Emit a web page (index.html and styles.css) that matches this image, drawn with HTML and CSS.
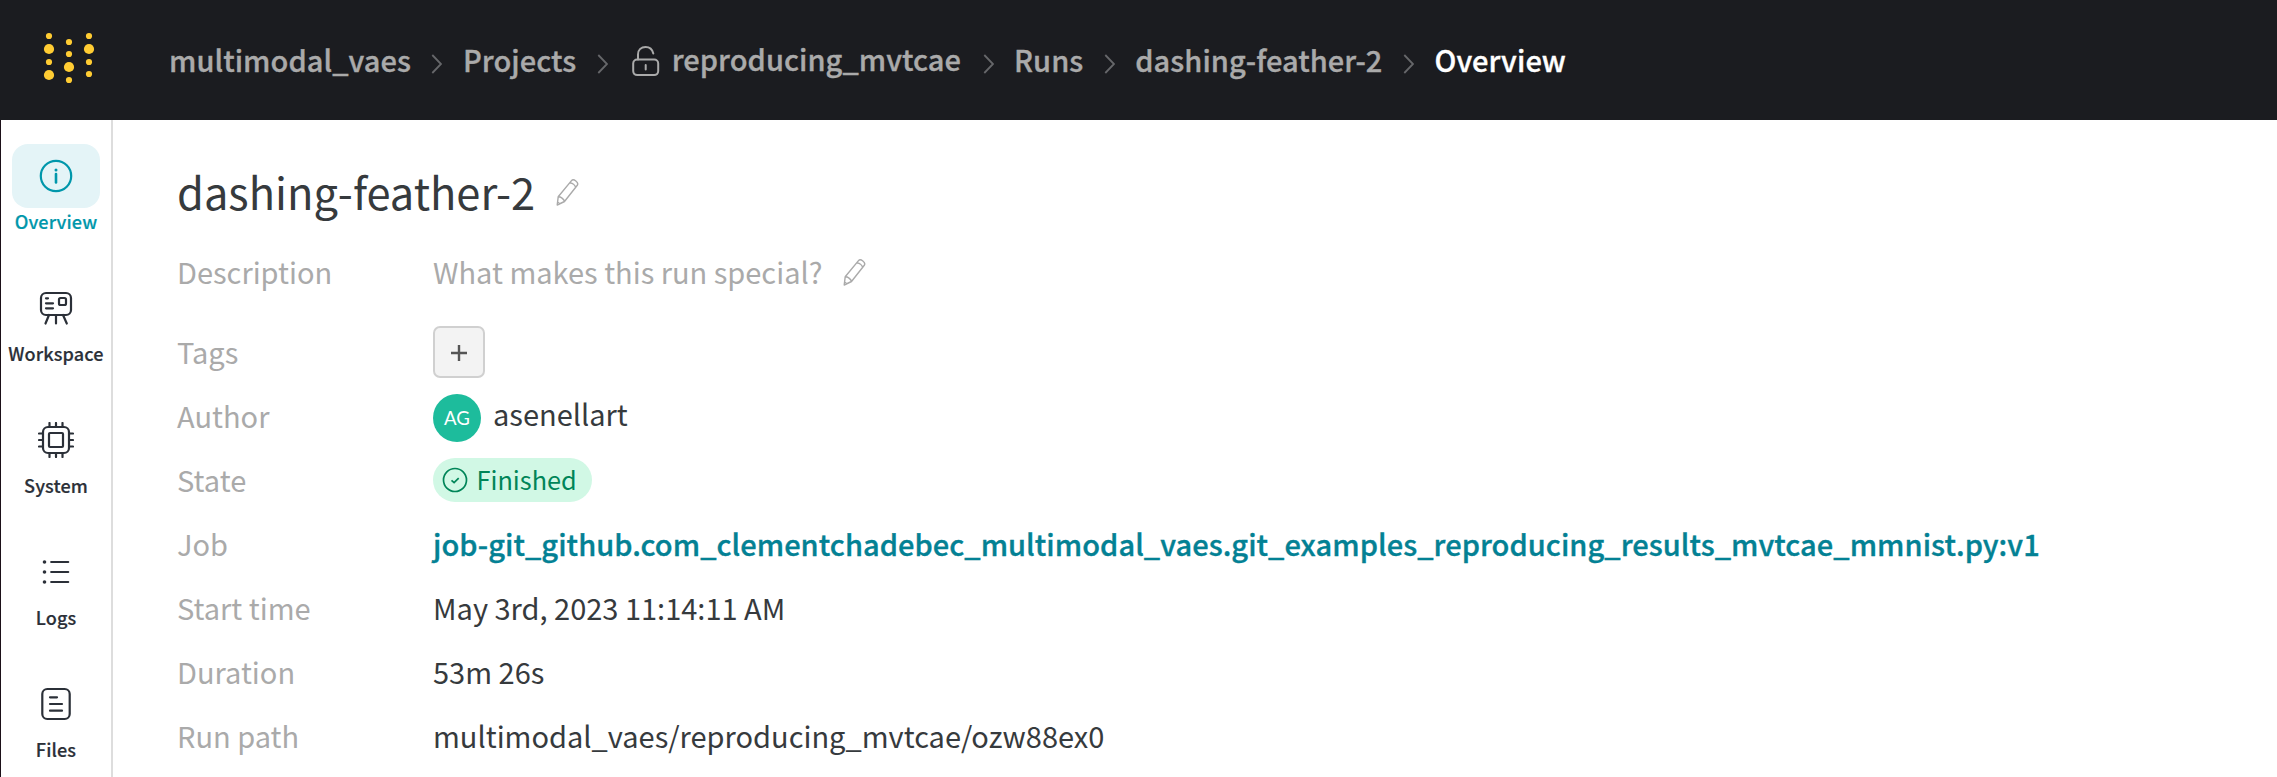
FILE: index.html
```html
<!DOCTYPE html>
<html lang="en">
<head>
<meta charset="utf-8">
<title>dashing-feather-2</title>
<link rel="stylesheet" href="styles.css">
</head>
<body>
<header class="topbar">
  <svg class="logo" width="52" height="52" viewBox="0 0 52 52">
    <circle cx="6" cy="4" r="3.1"/><circle cx="6" cy="17" r="5.1"/><circle cx="6" cy="30" r="3.1"/><circle cx="6" cy="43" r="5.1"/>
    <circle cx="26" cy="10" r="3.1"/><circle cx="26" cy="22" r="3.1"/><circle cx="26" cy="35" r="5.1"/><circle cx="26" cy="48" r="3.1"/>
    <circle cx="46" cy="4" r="3.1"/><circle cx="46" cy="17" r="5.1"/><circle cx="46" cy="30" r="3.1"/><circle cx="46" cy="42" r="3.1"/>
  </svg>
  <nav class="crumbs">
    <a class="crumb">multimodal_vaes</a>
    <svg class="chev" viewBox="0 0 11 20"><path d="M1.3 1l8.700 9-8.700 9"/></svg>
    <a class="crumb">Projects</a>
    <svg class="chev" viewBox="0 0 11 20"><path d="M1.3 1l8.700 9-8.700 9"/></svg>
    <a class="crumb crumb-project">
      <svg class="lock" viewBox="0 0 28 32"><rect x="1.2" y="14.5" width="25" height="15.6" rx="4"/><path d="M6 14.5V9.5C6 4.500 9.300 2 13.600 2c3.800 0 6.700 2.200 7.700 6.500M13.700 20v4.500"/></svg><span class="crumb-text">reproducing_mvtcae</span>
    </a>
    <svg class="chev" viewBox="0 0 11 20"><path d="M1.3 1l8.700 9-8.700 9"/></svg>
    <a class="crumb">Runs</a>
    <svg class="chev" viewBox="0 0 11 20"><path d="M1.3 1l8.700 9-8.700 9"/></svg>
    <a class="crumb">dashing-feather-2</a>
    <svg class="chev" viewBox="0 0 11 20"><path d="M1.3 1l8.700 9-8.700 9"/></svg>
    <a class="crumb current">Overview</a>
  </nav>
</header>
<div class="body">
  <aside class="sidebar">
    <a class="item active"><span class="tile"><svg class="icon" viewBox="0 0 36 36"><circle cx="18" cy="18" r="15.200"/><path d="M18 16v8.500" stroke-width="2.600"/><circle cx="18" cy="12" r="1.500" fill="currentColor" stroke="none"/></svg></span><span class="name">Overview</span></a>
    <a class="item"><span class="tile"><svg class="icon" viewBox="0 0 36 36"><rect x="3" y="3" width="30" height="22" rx="5"/><rect x="21" y="8" width="7" height="7" rx="1.500"/><path d="M8 8.300h2M8 13.300h7M8 18.300h7M11 25l-3.500 8.500M18 25v8.500M25 25l3.800 8.500"/></svg></span><span class="name">Workspace</span></a>
    <a class="item"><span class="tile"><svg class="icon" viewBox="0 0 36 36"><rect x="5" y="5" width="26" height="26" rx="5"/><rect x="11" y="11" width="14" height="14" rx="1"/><path d="M11.500 5V1M18 5V1M24.500 5V1M11.500 35v-4M18 35v-4M24.500 35v-4M5 11.500H1M5 18H1M5 24.500H1M35 11.500h-4M35 18h-4M35 24.500h-4"/></svg></span><span class="name">System</span></a>
    <a class="item"><span class="tile"><svg class="icon" viewBox="0 0 36 36"><path d="M13.200 8h17M13.200 18h17M13.200 28h17"/><g fill="currentColor" stroke="none"><circle cx="6.500" cy="8" r="1.800"/><circle cx="6.500" cy="18" r="1.800"/><circle cx="6.500" cy="28" r="1.800"/></g></svg></span><span class="name">Logs</span></a>
    <a class="item"><span class="tile"><svg class="icon" viewBox="0 0 36 36"><rect x="4.300" y="3" width="27.400" height="30" rx="5"/><path d="M12 11.300h7M12 18h12M12 24.700h12"/></svg></span><span class="name">Files</span></a>
  </aside>
  <main class="main">
    <h1 class="title"><span class="title-text">dashing-feather-2</span><svg class="pencil" viewBox="0 0 24 28"><path d="M1.200 27l1-8.200L15.500 2.600c2-2.200 7.700 1.700 5.800 4.700L8.500 23.500zM2.200 18.800c2.300-.2 5.800 2 6.300 4.700M13.800 4.800c2.500.2 5.300 2.300 5.900 4.900M1.600 24l2.200 1.700"/></svg></h1>
    <div class="row description"><span class="label">Description</span><span class="value muted">What makes this run special?</span><svg class="pencil" viewBox="0 0 24 28"><path d="M1.200 27l1-8.200L15.500 2.600c2-2.200 7.700 1.700 5.800 4.700L8.500 23.500zM2.200 18.800c2.300-.2 5.800 2 6.300 4.700M13.800 4.800c2.500.2 5.300 2.300 5.900 4.900M1.600 24l2.200 1.700"/></svg></div>
    <div class="row"><span class="label">Tags</span><button class="add" aria-label="Add tag"><svg width="18" height="18" viewBox="0 0 18 18"><path d="M9 1v16M1 9h16"/></svg></button></div>
    <div class="row"><span class="label">Author</span><span class="avatar">AG</span><span class="value author">asenellart</span></div>
    <div class="row"><span class="label">State</span><span class="badge"><svg class="check" viewBox="0 0 26 26"><circle cx="13" cy="13" r="11.500"/><path d="M9.500 13.300l2.600 2.400 4.600-4.500"/></svg><span class="badge-text">Finished</span></span></div>
    <div class="row"><span class="label">Job</span><a class="value job">job-git_github.com_clementchadebec_multimodal_vaes.git_examples_reproducing_results_mvtcae_mmnist.py:v1</a></div>
    <div class="row"><span class="label">Start time</span><span class="value">May 3rd, 2023 11:14:11 AM</span></div>
    <div class="row"><span class="label">Duration</span><span class="value">53m 26s</span></div>
    <div class="row"><span class="label">Run path</span><span class="value">multimodal_vaes/reproducing_mvtcae/ozw88ex0</span></div>
  </main>
</div>
</body>
</html>
```
FILE: styles.css
```css
* { box-sizing: border-box; }
body {
  margin: 0;
  height: 777px;
  overflow: hidden;
  background: #fff;
  color: #363a3d;
  font-family: "Noto Sans CJK SC", "Noto Sans", sans-serif;
  font-size: 29px;
  line-height: 60px;
}
svg { flex: none; fill: none; }
.topbar {
  height: 120px;
  padding-left: 43px;
  display: flex;
  align-items: center;
  background: #1b1c20;
}
.logo { fill: #ffcc33; margin-bottom: 4px; }
.crumbs {
  display: flex;
  align-items: center;
  gap: 20.5px;
  margin-left: 74px;
  color: #aaa;
  font-weight: 500;
  letter-spacing: 0.06px;
  -webkit-text-stroke: 0.35px currentColor;
  white-space: nowrap;
}
.crumb { padding-bottom: 2px; }
.crumb-project { display: flex; align-items: center; gap: 11.5px; margin-left: 4px; }
.crumb-text { margin-top: -2px; }
.chev { width: 11px; height: 20px; stroke: #66676a; stroke-width: 1.8; margin-top: 7px; }
.lock { width: 28px; height: 32px; stroke: #aaa; stroke-width: 2; stroke-linecap: round; margin-top: 4px; }
.crumb-project + .chev { margin-left: 1px; }
.current { color: #fff; }
.body { display: flex; height: 657px; }
.sidebar {
  flex: none;
  width: 113px;
  border-left: 1px solid #1b1018;
  border-right: 2px solid #ddd;
  padding-top: 24px;
  color: #2b3038;
}
.item { height: 132px; display: flex; flex-direction: column; align-items: center; }
.tile {
  width: 88px;
  height: 64px;
  border-radius: 16px;
  display: flex;
  align-items: center;
  justify-content: center;
}
.icon { width: 36px; height: 36px; stroke: currentColor; stroke-width: 2.2; stroke-linecap: round; stroke-linejoin: round; }
.active { color: #0097ab; }
.active .tile { background: #e4f4f7; }
.name {
  font-size: 18.1px;
  font-weight: 500;
  line-height: 26px;
  letter-spacing: 0.1px;
  -webkit-text-stroke: 0.2px currentColor;
}
.main { padding: 34px 0 0 64px; white-space: nowrap; }
.title {
  margin: 0;
  height: 72px;
  display: flex;
  align-items: center;
  font-size: 43.4px;
  font-weight: 400;
  line-height: 64px;
}
.title-text { padding-top: 2px; }
.pencil { width: 24px; height: 28px; stroke: #aaa; stroke-width: 1.4; stroke-linejoin: round; margin-left: 21px; }
.title .pencil { margin-top: 4px; margin-left: 20.5px; }
.row { height: 64px; display: flex; align-items: center; }
.description { margin: 14px 0 16px; }
.label, .value { padding-bottom: 2px; }
.label { width: 256px; color: #aaa; }
.muted { color: #aaa; }
.add {
  width: 52px;
  height: 52px;
  padding: 0;
  border: 2px solid #d0d0d0;
  border-radius: 7px;
  background: #f3f3f3;
  display: flex;
  align-items: center;
  justify-content: center;
}
.add svg { stroke: #555; stroke-width: 2.4; margin-top: 1px; }
.avatar {
  width: 48px;
  height: 48px;
  margin-top: 4px;
  border-radius: 50%;
  background: #1dbc9c;
  color: #fff;
  font-family: Lato, sans-serif;
  font-size: 18.6px;
  line-height: 48px;
  text-align: center;
}
.author { margin-left: 12px; margin-top: -4px; }
.badge {
  height: 44px;
  width: 159px;
  border-radius: 22px;
  padding-left: 9px;
  display: flex;
  align-items: center;
  gap: 8.5px;
  background: #d1f8e5;
  color: #008558;
  font-size: 25.3px;
}
.badge-text { margin-top: -2px; }
.check { width: 26px; height: 26px; stroke: #008558; stroke-width: 1.7; }
.job {
  color: #038194;
  font-weight: 500;
  letter-spacing: 0.06px;
  -webkit-text-stroke: 0.35px currentColor;
}
```
